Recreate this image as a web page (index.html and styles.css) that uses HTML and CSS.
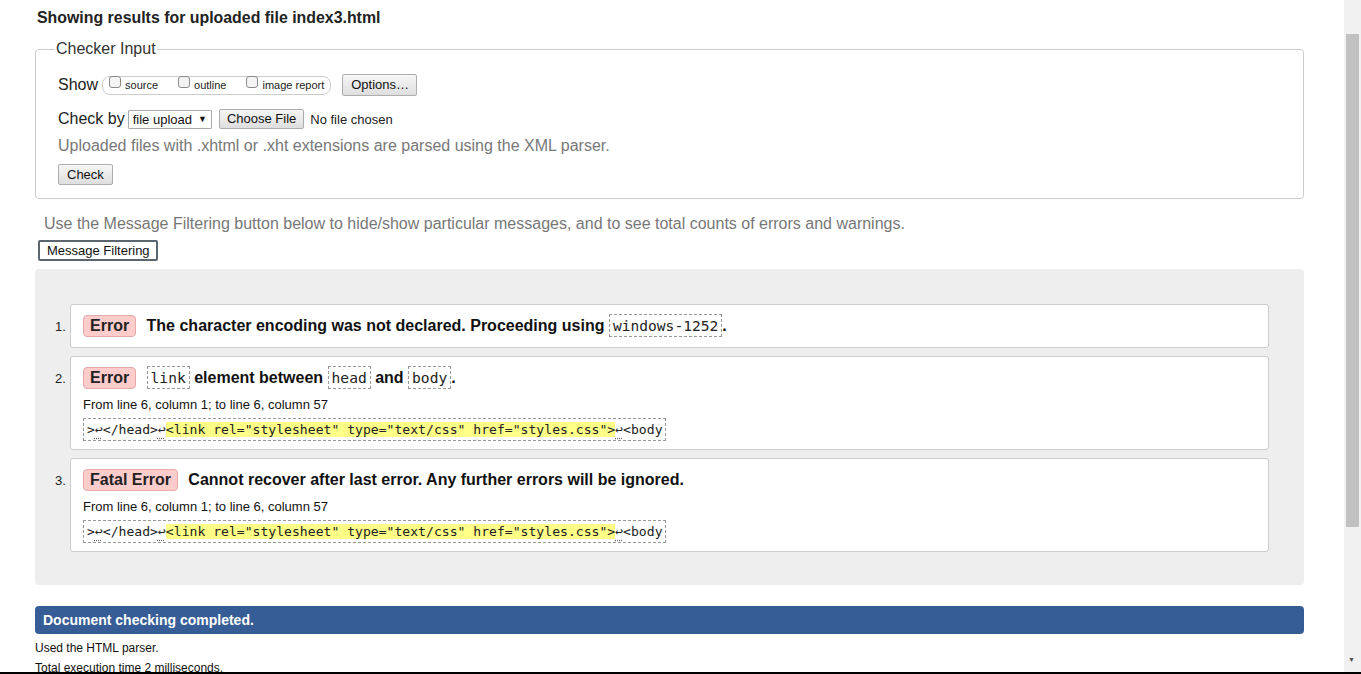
FILE: index.html
```html
<!DOCTYPE html>
<html>
<head>
<meta charset="utf-8">
<title>Validator results</title>
<link rel="stylesheet" href="styles.css">
</head>
<body>
<div class="page">
  <h2 class="heading">Showing results for uploaded file index3.html</h2>
  <fieldset class="input">
    <legend>Checker Input</legend>
    <div class="row show-row">
      <span class="lbl">Show</span>
      <span class="pill">
        <label><span class="cb"></span>source</label>
        <label><span class="cb"></span>outline</label>
        <label><span class="cb"></span>image report</label>
      </span>
      <span class="btn opt">Options…</span>
    </div>
    <div class="row check-row">
      <span class="lbl">Check by</span>
      <span class="select">file upload <span class="arrow">▼</span></span>
      <span class="btn choose">Choose File</span>
      <span class="nofile">No file chosen</span>
    </div>
    <p class="hint">Uploaded files with .xhtml or .xht extensions are parsed using the XML parser.</p>
    <span class="btn check">Check</span>
  </fieldset>
  <p class="filter-note">Use the Message Filtering button below to hide/show particular messages, and to see total counts of errors and warnings.</p>
  <span class="btn filter">Message Filtering</span>
  <div class="results">
    <ol class="msgs">
      <li class="msg">
        <span class="num">1.</span>
        <div class="card">
          <p class="title"><span class="badge">Error</span> The character encoding was not declared. Proceeding using <code>windows-1252</code>.</p>
        </div>
      </li>
      <li class="msg">
        <span class="num">2.</span>
        <div class="card">
          <p class="title"><span class="badge">Error</span> <code>link</code> element between <code>head</code> and <code>body</code>.</p>
          <p class="loc">From line 6, column 1; to line 6, column 57</p>
          <p class="extract"><code class="ex">&gt;<u>↩</u>&lt;/head&gt;<u>↩</u><b>&lt;link rel="stylesheet" type="text/css" href="styles.css"&gt;</b><u>↩</u>&lt;body</code></p>
        </div>
      </li>
      <li class="msg">
        <span class="num">3.</span>
        <div class="card">
          <p class="title"><span class="badge">Fatal Error</span> Cannot recover after last error. Any further errors will be ignored.</p>
          <p class="loc">From line 6, column 1; to line 6, column 57</p>
          <p class="extract"><code class="ex">&gt;<u>↩</u>&lt;/head&gt;<u>↩</u><b>&lt;link rel="stylesheet" type="text/css" href="styles.css"&gt;</b><u>↩</u>&lt;body</code></p>
        </div>
      </li>
    </ol>
  </div>
  <div class="done">Document checking completed.</div>
  <p class="stat">Used the HTML parser.</p>
  <p class="stat">Total execution time 2 milliseconds.</p>
</div>
<div class="scrollbar"><div class="thumb"></div><div class="down">▼</div></div>
<div class="bottom-line"></div>
</body>
</html>
```
FILE: styles.css
```css
html, body {
  margin: 0;
  padding: 0;
  height: 674px;
  overflow: hidden;
  background: #fff;
}
body {
  font-family: "Liberation Sans", Arial, sans-serif;
  color: #111;
}
.page {
  width: 1269px;
  padding: 0 0 0 35px;
}
.heading {
  font-size: 15.9px;
  font-weight: bold;
  margin: 0;
  padding: 9px 0 0 2px;
  line-height: 18px;
  color: #222;
}
.input {
  margin: 13px 0 0 0;
  border: 1px solid #ccc;
  border-radius: 4px;
  padding: 5px 21px 13px 22px;
  min-width: 0;
}
.input legend {
  font-size: 16px;
  color: #333;
  padding: 0 1px;
  margin-left: -3px;
  line-height: 18px;
}
.row {
  display: flex;
  align-items: center;
}
.lbl {
  font-size: 16px;
  color: #222;
  margin-right: 4px;
}
.show-row {
  height: 22px;
  margin-top: 11px;
}
.pill {
  display: inline-flex;
  align-items: center;
  border: 1px solid #ccc;
  border-radius: 8px;
  height: 17px;
  padding: 0 6px 0 6px;
  font-size: 11px;
  color: #222;
  gap: 20px;
}
.pill label {
  display: inline-flex;
  align-items: center;
  gap: 4px;
}
.cb {
  display: inline-block;
  width: 12px;
  height: 12px;
  border: 1px solid #8a8a8a;
  border-radius: 3px;
  background: #f4f4f4;
  box-sizing: border-box;
  position: relative;
  top: -3px;
}
.btn {
  display: inline-block;
  font-size: 13px;
  font-family: "Liberation Sans", Arial, sans-serif;
  color: #111;
  background: linear-gradient(#f6f6f6, #dedede);
  border: 1px solid #adadad;
  border-radius: 2px;
  padding: 0 8px;
  line-height: 18px;
}
.opt {
  margin-left: 11px;
  font-size: 13px;
  padding: 1px 7px 1px 8px;
}
.check-row {
  margin-top: 13px;
  height: 20px;
}
.select {
  display: inline-flex;
  align-items: center;
  height: 17px;
  border: 1px solid #aaa;
  border-radius: 1px;
  background: #fff;
  font-size: 13px;
  padding: 0 4px 0 4px;
  margin-left: -1px;
}
.select .arrow {
  font-size: 9px;
  margin-left: 6px;
}
.choose {
  margin-left: 7px;
  padding: 0 7px;
  line-height: 18px;
}
.nofile {
  font-size: 13px;
  margin-left: 6px;
  color: #222;
}
.hint {
  margin: 8px 0 0 0;
  font-size: 16px;
  color: #777;
  line-height: 18px;
}
.check {
  margin-top: 9px;
  padding: 1px 8px 0 8px;
}
.filter-note {
  margin: 15px 0 0 9px;
  font-size: 16px;
  color: #777;
  line-height: 20px;
}
.filter {
  margin: 6px 0 0 3px;
  background: #fff;
  border: 2px solid #5c6670;
  padding: 0 6px 0 7px;
  line-height: 17px;
  border-radius: 2px;
}
.results {
  margin-top: 8px;
  background: #eee;
  border-radius: 4px;
  padding: 35px 35px 33px 20px;
}
.msgs {
  list-style: none;
  margin: 0;
  padding: 0;
  display: flex;
  flex-direction: column;
  gap: 8px;
}
.msg {
  display: flex;
  align-items: flex-start;
}
.num {
  width: 15px;
  font-size: 13px;
  color: #222;
  padding-top: 15px;
}
.card {
  flex: 1;
  background: #fff;
  border: 1px solid #ccc;
  border-radius: 3px;
  padding: 9px 12px 9px 12px;
}
.title {
  margin: 0;
  font-size: 16px;
  font-weight: bold;
  line-height: 24px;
  color: #111;
}
.badge {
  display: inline-block;
  background: #fcc;
  border: 1px solid #e4aaaa;
  border-radius: 4px;
  padding: 0 6px;
  line-height: 20px;
  margin-right: 6px;
  color: #222;
}
.title code {
  font-family: "DejaVu Sans Mono", "Liberation Mono", monospace;
  font-weight: normal;
  font-size: 14.6px;
  border: 1px dashed #999;
  padding: 2px 3px;
  color: #222;
}
.loc {
  margin: 7px 0 0 0;
  font-size: 13px;
  line-height: 16px;
  color: #111;
}
.extract {
  margin: 5px 0 0 0;
  line-height: 22px;
  height: 22px;
}
.ex {
  font-family: "DejaVu Sans Mono", "Liberation Mono", monospace;
  font-size: 13.1px;
  border: 1px dashed #999;
  padding: 3px 2px 3px 3px;
  color: #222;
}
.ex u {
  text-decoration: underline dotted #666;
  text-underline-offset: 4px;
}
.ex b {
  font-weight: normal;
  background: #ff8;
}
.done {
  margin-top: 21px;
  background: #365d95;
  color: #fff;
  font-size: 14px;
  font-weight: bold;
  border-radius: 4px;
  padding: 0 8px;
  line-height: 28px;
}
.stat {
  margin: 0;
  font-size: 12px;
  line-height: 20px;
  padding-top: 0;
  color: #111;
}
.done + .stat {
  margin-top: 4px;
}
.scrollbar {
  position: fixed;
  top: 0;
  right: 0;
  width: 17px;
  height: 674px;
  background: #f1f1f1;
}
.thumb {
  position: absolute;
  left: 2px;
  top: 34px;
  width: 13px;
  height: 493px;
  background: #c1c1c1;
}
.down {
  position: absolute;
  left: 4px;
  top: 656px;
  font-size: 7px;
  color: #505050;
}
.bottom-line {
  position: fixed;
  left: 0;
  bottom: 0;
  width: 1361px;
  height: 2px;
  background: #000;
}
```
